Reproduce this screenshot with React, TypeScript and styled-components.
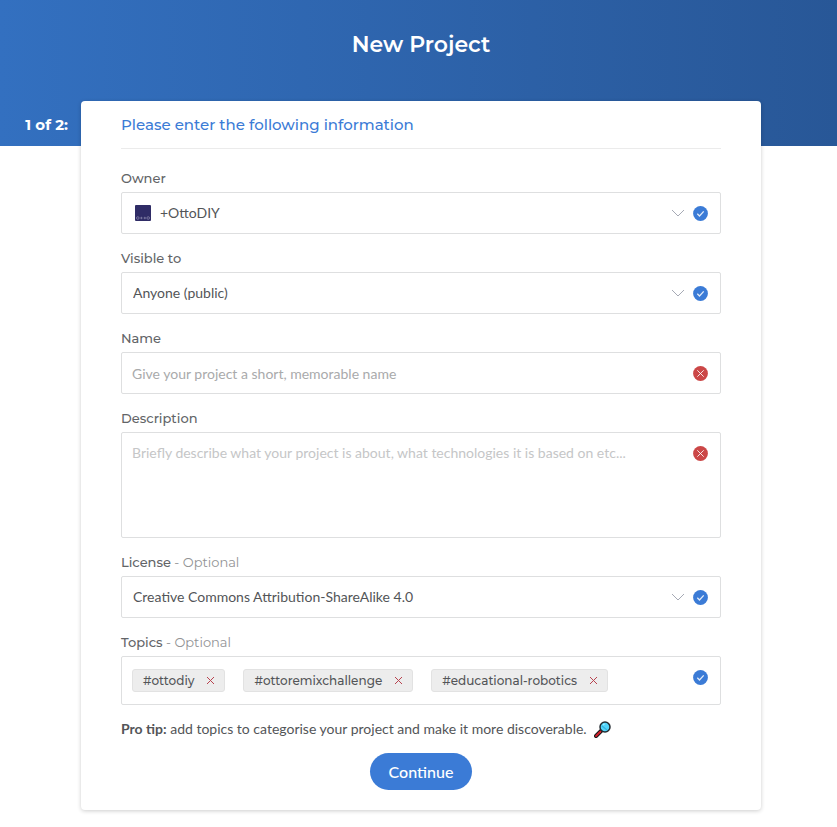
import React, { useState } from "react";
import styled, { createGlobalStyle } from "styled-components";

const heading = `"Montserrat", "Inter", "Liberation Sans", sans-serif`;
const body = `"Proxima Nova", "Lato", "Liberation Sans", sans-serif`;

const GlobalStyle = createGlobalStyle`
  *, *::before, *::after { box-sizing: border-box; }
  body {
    margin: 0;
    background: #fff;
    color: #535558;
    font-family: ${body};
    font-size: 14px;
    line-height: 20px;
  }
  button, input, select, textarea { font: inherit; color: inherit; }
`;

const Banner = styled.header`
  height: 146px;
  padding: 31px 0 0 5px;
  background: linear-gradient(90deg, #3370c0, #285797);
  color: #fff;
  text-align: center;
`;

const Title = styled.h1`
  margin: 0;
  font: 600 22px/28px ${heading};
`;

const Layout = styled.main`
  display: grid;
  grid-template-columns: 1fr minmax(0, 680px) 1fr;
  margin-top: -45px;
  padding: 0 0 16px 5px;
`;

const Step = styled.p`
  margin: 0;
  padding: 14px 13px 0 0;
  color: #fff;
  font: 700 15px/20px ${heading};
  text-align: right;
  white-space: nowrap;
`;

const Card = styled.form`
  padding: 0 40px 20px;
  border-radius: 4px;
  background: #fff;
  box-shadow: 0 1px 4px rgba(0, 0, 0, 0.2);
`;

const CardTitle = styled.h2`
  margin: 0 0 19px;
  padding: 12px 0 11px;
  border-bottom: 1px solid #ebebeb;
  color: #3b7bd6;
  font: 500 15px/24px ${heading};
`;

const Fields = styled.div`
  display: grid;
  gap: 14px;
`;

const FieldGroup = styled.div`
  display: grid;
  gap: 4px;
`;

const Label = styled.label`
  color: #626467;
  font: 500 13px/20px ${heading};
`;

const Optional = styled.span`
  color: #929395;
  font-weight: 400;
`;

const Box = styled.div`
  display: grid;
  grid-template-columns: minmax(0, 1fr);
  border: 1px solid #dedfe0;
  border-radius: 2px;
  background: #fff;

  & > * { grid-area: 1 / 1; }
  &:focus-within { border-color: #3b7bd6; }
`;

const Select = styled.select<{ $withAvatar?: boolean }>`
  height: 40px;
  padding: 0 60px 0 ${(p) => (p.$withAvatar ? 38 : 11)}px;
  border: 0;
  outline: 0;
  appearance: none;
  background: transparent;
`;

const Input = styled.input`
  height: 40px;
  padding: 0 44px 0 10px;
  border: 0;
  outline: 0;
  background: transparent;
  &::placeholder { color: #a9aaab; opacity: 1; }
`;

const TextArea = styled.textarea`
  display: block;
  height: 104px;
  padding: 10px 44px 10px 10px;
  border: 0;
  outline: 0;
  resize: none;
  background: transparent;
  &::placeholder { color: #c5c6c7; opacity: 1; }
`;

const Adornments = styled.span<{ $side?: "left" | "right" }>`
  display: flex;
  align-items: center;
  gap: 8px;
  height: 40px;
  margin: 0 12px;
  justify-self: ${(p) => (p.$side === "left" ? "start" : "end")};
  pointer-events: none;
`;

const TagList = styled.ul`
  display: flex;
  flex-wrap: wrap;
  gap: 8px 18px;
  margin: 0;
  padding: 12px 40px 12px 10px;
  list-style: none;
`;

const Tag = styled.li`
  display: flex;
  align-items: center;
  gap: 12px;
  height: 23px;
  padding: 0 9px 0 10px;
  border: 1px solid #e2e2e2;
  border-radius: 3px;
  background: #ededed;
  font: 500 12px/20px ${heading};
`;

const RemoveButton = styled.button`
  display: flex;
  padding: 0;
  border: 0;
  background: none;
  color: #b8434f;
  cursor: pointer;
`;

const Tip = styled.p`
  display: flex;
  align-items: center;
  gap: 7px;
  margin: 14px 0;
`;

const Actions = styled.div`
  display: flex;
  justify-content: center;
`;

const Continue = styled.button`
  height: 37px;
  padding: 0 19px;
  border: 0;
  border-radius: 19px;
  background: #3b7bd6;
  color: #fff;
  font: 500 16px/24px ${body};
  cursor: pointer;
`;

const Chevron = () => (
  <svg width="14" height="8" viewBox="0 0 14 8" fill="none" stroke="#a6aab5" aria-hidden="true">
    <path d="M1 1l6 6 6-6" />
  </svg>
);

const Status = ({ ok }: { ok: boolean }) => (
  <svg width="15" height="15" viewBox="0 0 15 15" fill="none" role="img" aria-label={ok ? "Valid" : "Required"}>
    <circle cx="7.5" cy="7.5" r="7.4" fill={ok ? "#3b7bd6" : "#cb4747"} />
    <path
      d={ok ? "M4.3 7.8l2.200 2.200 4.200-4.600" : "M4.3 4.3l6.400 6.400M10.700 4.300l-6.400 6.400"}
      stroke="#fff"
      strokeOpacity="0.85"
      strokeWidth={ok ? 1.3 : 1}
    />
  </svg>
);

const Avatar = () => (
  <svg width="18" height="18" viewBox="0 0 18 18" aria-hidden="true">
    <rect x="1" y="1" width="16" height="16" rx="1" fill="#2f2c66" />
    <g fill="none" stroke="#8583a8" strokeWidth="0.8">
      <circle cx="3.800" cy="14" r="1.300" />
      <path d="M6.200 14h2.400M7.400 12.800v2.400M9.600 14H12M10.800 12.800v2.400" />
      <circle cx="14.200" cy="14" r="1.300" />
    </g>
  </svg>
);

const Cross = () => (
  <svg width="9" height="9" viewBox="0 0 9 9" fill="none" stroke="currentColor" aria-hidden="true">
    <path d="M1 1l7 7M8 1L1 8" />
  </svg>
);

const Magnifier = () => (
  <svg width="17" height="17" viewBox="0 0 17 17" aria-hidden="true">
    <path d="M2 15l6-6" stroke="#171717" strokeWidth="4" strokeLinecap="round" />
    <path d="M2 15l4.500-4.500" stroke="#d8202c" strokeWidth="1.800" strokeLinecap="round" />
    <circle cx="11" cy="6" r="5" fill="#52d5fb" stroke="#222a30" strokeWidth="1.500" />
    <path d="M8 5l5 4" stroke="#36b4df" strokeWidth="1.500" />
    <path d="M9 4l1.500-1" stroke="#a8efff" strokeWidth="1.200" />
  </svg>
);

type SelectFieldProps = {
  id: string;
  label: string;
  value: string;
  optional?: boolean;
  avatar?: boolean;
};

const SelectField = ({ id, label, value, optional, avatar }: SelectFieldProps) => (
  <FieldGroup>
    <Label htmlFor={id}>
      {label}
      {optional && <Optional> - Optional</Optional>}
    </Label>
    <Box>
      {avatar && (
        <Adornments $side="left">
          <Avatar />
        </Adornments>
      )}
      <Select id={id} $withAvatar={avatar}>
        <option>{value}</option>
      </Select>
      <Adornments>
        <Chevron />
        <Status ok />
      </Adornments>
    </Box>
  </FieldGroup>
);

export default function App() {
  const [topics, setTopics] = useState(["#ottodiy", "#ottoremixchallenge", "#educational-robotics"]);

  return (
    <>
      <GlobalStyle />
      <Banner>
        <Title>New Project</Title>
      </Banner>
      <Layout>
        <Step>1 of 2:</Step>
        <Card onSubmit={(e) => e.preventDefault()}>
          <CardTitle>Please enter the following information</CardTitle>
          <Fields>
            <SelectField id="owner" label="Owner" value="+OttoDIY" avatar />
            <SelectField id="visibility" label="Visible to" value="Anyone (public)" />
            <FieldGroup>
              <Label htmlFor="name">Name</Label>
              <Box>
                <Input id="name" placeholder="Give your project a short, memorable name" />
                <Adornments>
                  <Status ok={false} />
                </Adornments>
              </Box>
            </FieldGroup>
            <FieldGroup>
              <Label htmlFor="description">Description</Label>
              <Box>
                <TextArea
                  id="description"
                  placeholder="Briefly describe what your project is about, what technologies it is based on etc..."
                />
                <Adornments>
                  <Status ok={false} />
                </Adornments>
              </Box>
            </FieldGroup>
            <SelectField id="license" label="License" value="Creative Commons Attribution-ShareAlike 4.0" optional />
            <FieldGroup>
              <Label as="span" id="topics-label">
                Topics<Optional> - Optional</Optional>
              </Label>
              <Box role="group" aria-labelledby="topics-label">
                <TagList>
                  {topics.map((topic) => (
                    <Tag key={topic}>
                      {topic}
                      <RemoveButton
                        type="button"
                        aria-label={`Remove ${topic}`}
                        onClick={() => setTopics(topics.filter((t) => t !== topic))}
                      >
                        <Cross />
                      </RemoveButton>
                    </Tag>
                  ))}
                </TagList>
                <Adornments>
                  <Status ok />
                </Adornments>
              </Box>
            </FieldGroup>
          </Fields>
          <Tip>
            <span>
              <strong>Pro tip:</strong> add topics to categorise your project and make it more discoverable.
            </span>
            <Magnifier />
          </Tip>
          <Actions>
            <Continue type="submit">Continue</Continue>
          </Actions>
        </Card>
      </Layout>
    </>
  );
}
